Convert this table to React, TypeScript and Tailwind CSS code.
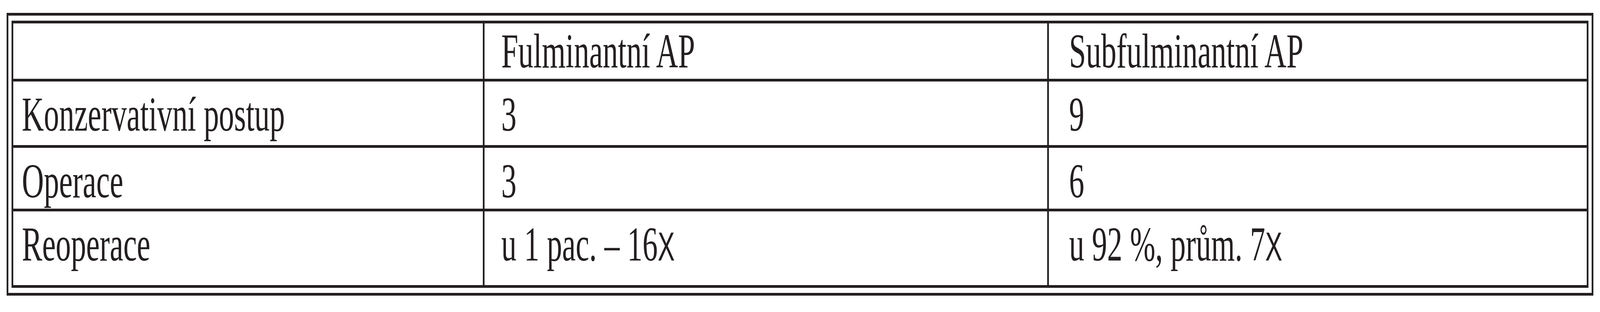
import React, { useEffect, useState } from "react";

// The table is laid out on the 6515px-wide design; if the browser window is
// narrower than that, the whole sheet is squeezed horizontally to fit it.
const DESIGN_WIDTH = 6515;

interface Row {
  label: string;
  fulminant: React.ReactNode;
  subfulminant: React.ReactNode;
  rowClass: string;
  padClass: string;
}

function Times({ children }: { children: React.ReactNode }) {
  // the "x" in the source is set in a sans face, a little smaller than the digits
  return (
    <span className="font-['Liberation_Sans',Arial,sans-serif] text-[104px] leading-none">
      {children}
    </span>
  );
}

const rows: Row[] = [
  {
    label: "Konzervativní postup",
    fulminant: "3",
    subfulminant: "9",
    rowClass: "h-[170px] border-t-[7px]",
    padClass: "pt-[23px]",
  },
  {
    label: "Operace",
    fulminant: "3",
    subfulminant: "6",
    rowClass: "h-[163px] border-t-[7px]",
    padClass: "pt-[24px]",
  },
  {
    label: "Reoperace",
    fulminant: (
      <>
        u 1 pac. – 16<Times>X</Times>
      </>
    ),
    subfulminant: (
      <>
        u 92 %, prům. 7<Times>X</Times>
      </>
    ),
    rowClass: "h-[196px] border-t-[7px]",
    padClass: "pt-[23px]",
  },
];

function useFitScale() {
  const read = () =>
    typeof window === "undefined"
      ? 1
      : Math.min(1, document.documentElement.clientWidth / DESIGN_WIDTH);
  const [scale, setScale] = useState(read);

  useEffect(() => {
    const onResize = () => setScale(read());
    window.addEventListener("resize", onResize);
    onResize();
    return () => window.removeEventListener("resize", onResize);
  }, []);

  return scale;
}

export default function App() {
  const scale = useFitScale();

  return (
    <div className="w-full h-[800px] overflow-hidden bg-white">
      <div
        className="w-[6515px] h-[800px] origin-top-left bg-white pt-[33px] pl-[27px] text-[#231f20] font-['Liberation_Serif','Times_New_Roman',serif] text-[124px] leading-[124px]"
        style={{ transform: `scaleX(${scale})` }}
      >
        {/* double frame */}
        <div className="w-[6461px] border-[7px] border-[#231f20] p-[13px]">
          <div className="border-[7px] border-[#231f20] flex flex-col">
            {/* header */}
            <div className="flex h-[142px]">
              <div className="w-[1912px] shrink-0" />
              <div className="w-[2298px] shrink-0 border-l-[7px] border-[#231f20] pl-[68px] pt-[10px] whitespace-nowrap">
                Fulminantní AP
              </div>
              <div className="w-[2197px] shrink-0 border-l-[7px] border-[#231f20] pl-[82px] pt-[10px] whitespace-nowrap">
                Subfulminantní AP
              </div>
            </div>

            {rows.map((row, i) => (
              <div key={i} className={`flex border-[#231f20] ${row.rowClass}`}>
                <div className={`w-[1912px] shrink-0 pl-[35px] whitespace-nowrap ${row.padClass}`}>
                  {row.label}
                </div>
                <div
                  className={`w-[2298px] shrink-0 border-l-[7px] border-[#231f20] pl-[68px] whitespace-nowrap ${row.padClass}`}
                >
                  {row.fulminant}
                </div>
                <div
                  className={`w-[2197px] shrink-0 border-l-[7px] border-[#231f20] pl-[82px] whitespace-nowrap ${row.padClass}`}
                >
                  {row.subfulminant}
                </div>
              </div>
            ))}
          </div>
        </div>
      </div>
    </div>
  );
}
